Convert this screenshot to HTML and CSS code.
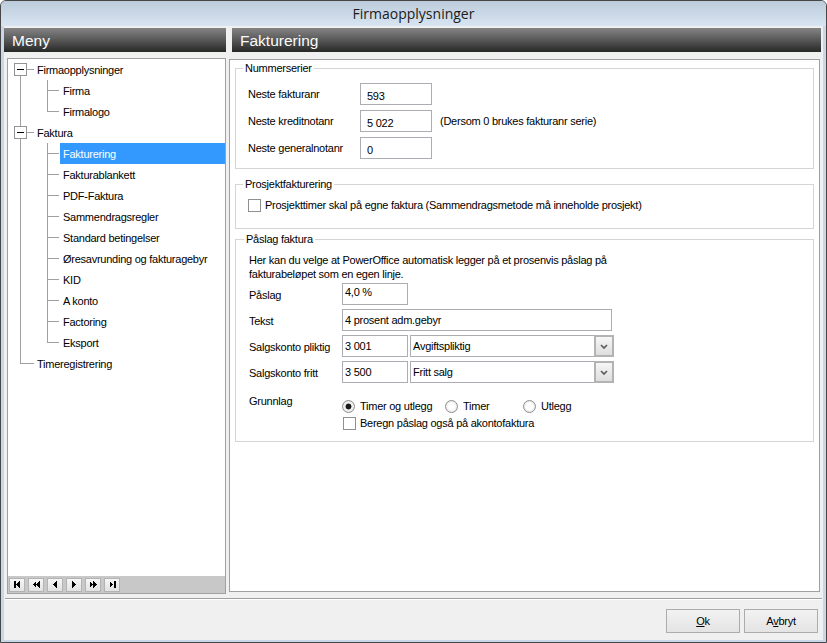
FILE: index.html
```html
<!DOCTYPE html>
<html lang="no">
<head>
<meta charset="utf-8">
<title>Firmaopplysninger</title>
<link rel="stylesheet" href="styles.css">
</head>
<body>
<div class="window">
  <div class="titlebar">Firmaopplysninger</div>
  <div class="client">
    <div class="panes">
      <div class="left">
        <div class="pane-header">Meny</div>
        <div class="tree-box">
          <div class="tree">
            <div class="row root first"><span class="exp"></span><span class="label">Firmaopplysninger</span></div>
            <div class="row child"><span class="label">Firma</span></div>
            <div class="row child last"><span class="label">Firmalogo</span></div>
            <div class="row root mid"><span class="exp"></span><span class="label">Faktura</span></div>
            <div class="row child"><span class="label selected">Fakturering</span></div>
            <div class="row child"><span class="label">Fakturablankett</span></div>
            <div class="row child"><span class="label">PDF-Faktura</span></div>
            <div class="row child"><span class="label">Sammendragsregler</span></div>
            <div class="row child"><span class="label">Standard betingelser</span></div>
            <div class="row child"><span class="label">Øresavrunding og fakturagebyr</span></div>
            <div class="row child"><span class="label">KID</span></div>
            <div class="row child"><span class="label">A konto</span></div>
            <div class="row child"><span class="label">Factoring</span></div>
            <div class="row child last"><span class="label">Eksport</span></div>
            <div class="row root lastroot"><span class="label">Timeregistrering</span></div>
          </div>
          <div class="navbar">
            <span class="nav-btn"><svg viewBox="0 0 14 12" width="14" height="12"><rect x="3.5" y="2" width="2" height="7"/><polygon points="9.5,2 9.5,9 6,5.5"/></svg></span>
            <span class="nav-btn"><svg viewBox="0 0 14 12" width="14" height="12"><polygon points="7,2 7,9 3.5,5.5"/><polygon points="10.5,2 10.5,9 7,5.5"/></svg></span>
            <span class="nav-btn"><svg viewBox="0 0 14 12" width="14" height="12"><polygon points="8.75,2 8.75,9 5.25,5.5"/></svg></span>
            <span class="nav-btn"><svg viewBox="0 0 14 12" width="14" height="12"><polygon points="5.25,2 5.25,9 8.75,5.5"/></svg></span>
            <span class="nav-btn"><svg viewBox="0 0 14 12" width="14" height="12"><polygon points="3.5,2 3.5,9 7,5.5"/><polygon points="7,2 7,9 10.5,5.5"/></svg></span>
            <span class="nav-btn"><svg viewBox="0 0 14 12" width="14" height="12"><polygon points="4.5,2 4.5,9 8,5.5"/><rect x="8.5" y="2" width="2" height="7"/></svg></span>
          </div>
        </div>
      </div>
      <div class="right">
        <div class="pane-header">Fakturering</div>
        <div class="content-box">
          <fieldset class="group g1">
            <legend>Nummerserier</legend>
            <div class="frow"><span class="lbl">Neste fakturanr</span><span class="input num">593</span></div>
            <div class="frow"><span class="lbl">Neste kreditnotanr</span><span class="input num">5 022</span><span class="note">(Dersom 0 brukes fakturanr serie)</span></div>
            <div class="frow"><span class="lbl">Neste generalnotanr</span><span class="input num">0</span></div>
          </fieldset>
          <fieldset class="group g2">
            <legend>Prosjektfakturering</legend>
            <div class="check-item"><span class="checkbox"></span>Prosjekttimer skal på egne faktura (Sammendragsmetode må inneholde prosjekt)</div>
          </fieldset>
          <fieldset class="group g3">
            <legend>Påslag faktura</legend>
            <p class="desc">Her kan du velge at PowerOffice automatisk legger på et prosenvis påslag på<br>fakturabeløpet som en egen linje.</p>
            <div class="frow"><span class="lbl">Påslag</span><span class="input short high">4,0 %</span></div>
            <div class="frow"><span class="lbl">Tekst</span><span class="input wide">4 prosent adm.gebyr</span></div>
            <div class="frow"><span class="lbl">Salgskonto pliktig</span><span class="input short">3 001</span><span class="combo"><span class="combo-text">Avgiftspliktig</span><span class="combo-btn"><svg viewBox="0 0 8 5" width="8" height="5"><polyline points="1,1 4,4 7,1"/></svg></span></span></div>
            <div class="frow"><span class="lbl">Salgskonto fritt</span><span class="input short">3 500</span><span class="combo"><span class="combo-text">Fritt salg</span><span class="combo-btn"><svg viewBox="0 0 8 5" width="8" height="5"><polyline points="1,1 4,4 7,1"/></svg></span></span></div>
            <div class="grunnlag">
              <span class="lbl">Grunnlag</span>
              <div class="options">
                <div class="radios">
                  <span class="radio-item r1"><span class="radio checked"></span>Timer og utlegg</span>
                  <span class="radio-item r2"><span class="radio"></span>Timer</span>
                  <span class="radio-item"><span class="radio"></span>Utlegg</span>
                </div>
                <div class="check-item"><span class="checkbox"></span>Beregn påslag også på akontofaktura</div>
              </div>
            </div>
          </fieldset>
        </div>
      </div>
    </div>
    <div class="separator"></div>
    <div class="footer">
      <button class="btn"><u>O</u>k</button>
      <button class="btn">A<u>v</u>bryt</button>
    </div>
  </div>
</div>
</body>
</html>
```

FILE: styles.css
```css
html, body {
  margin: 0;
  padding: 0;
}
body {
  width: 827px;
  height: 643px;
  overflow: hidden;
  background: #ffffff;
  font-family: "Liberation Sans", Arial, sans-serif;
  font-size: 11px;
  letter-spacing: -0.25px;
  color: #000;
}

.window {
  box-sizing: border-box;
  width: 827px;
  height: 643px;
  border: 1px solid #474747;
  border-radius: 6px 6px 0 0;
  background: #c9d8e9;
  display: flex;
  flex-direction: column;
}

.titlebar {
  flex: none;
  height: 25px;
  border-radius: 5px 5px 0 0;
  background: linear-gradient(#bccbdb, #d8e4f1);
  text-align: center;
  font-family: "Open Sans", "Noto Sans", sans-serif;
  font-size: 14px;
  line-height: 26px;
  letter-spacing: 0;
  color: #1b1b1b;
}

.client {
  flex: 1;
  margin: 0 3px 2px 3px;
  padding-top: 2px;
  background: #f0f0f0;
  display: flex;
  flex-direction: column;
}

.panes {
  flex: none;
  height: 566px;
  display: flex;
  gap: 3px;
}
.left {
  width: 222px;
  display: flex;
  flex-direction: column;
}
.right {
  width: 592px;
  display: flex;
  flex-direction: column;
}

.pane-header {
  flex: none;
  height: 24px;
  padding-left: 8px;
  background: linear-gradient(#848484, #5c5c5c 45%, #262826);
  color: #fbfbfb;
  font-size: 15.5px;
  line-height: 25px;
  letter-spacing: 0;
}
.right .pane-header {
  margin-left: 3px;
}

/* ---------- tree ---------- */
.tree-box {
  box-sizing: border-box;
  width: 219px;
  height: 536px;
  margin: 6px 0 0 3px;
  border: 1px solid #a0a0a0;
  background: #fff;
  display: flex;
  flex-direction: column;
}
.tree {
  flex: 1;
}
.row {
  height: 21px;
  display: flex;
  align-items: center;
  white-space: nowrap;
}
.exp {
  flex: none;
  box-sizing: border-box;
  width: 13px;
  height: 13px;
  margin-left: 6px;
  border: 1px solid #939393;
  background: linear-gradient(#000, #000) 2px 5px / 7px 1px no-repeat, #fff;
}
.label {
  box-sizing: border-box;
  height: 21px;
  padding: 2px 2px 0 2px;
  line-height: 19px;
}
.root .label {
  margin-left: 8px;
}
.root.lastroot .label {
  margin-left: 27px;
}
.root.first {
  background:
    linear-gradient(#a0a0a0, #a0a0a0) 19px 10px / 7px 1px no-repeat,
    linear-gradient(#a0a0a0, #a0a0a0) 12px 17px / 1px 4px no-repeat;
}
.root.mid {
  background:
    linear-gradient(#a0a0a0, #a0a0a0) 19px 10px / 7px 1px no-repeat,
    linear-gradient(#a0a0a0, #a0a0a0) 12px 0 / 1px 4px no-repeat,
    linear-gradient(#a0a0a0, #a0a0a0) 12px 17px / 1px 4px no-repeat;
}
.root.lastroot {
  background:
    linear-gradient(#a0a0a0, #a0a0a0) 12px 0 / 1px 11px no-repeat,
    linear-gradient(#a0a0a0, #a0a0a0) 12px 10px / 14px 1px no-repeat;
}
.child {
  background:
    linear-gradient(#a0a0a0, #a0a0a0) 12px 0 / 1px 21px no-repeat,
    linear-gradient(#a0a0a0, #a0a0a0) 39px 0 / 1px 21px no-repeat,
    linear-gradient(#a0a0a0, #a0a0a0) 40px 10px / 11px 1px no-repeat;
}
.child.last {
  background:
    linear-gradient(#a0a0a0, #a0a0a0) 12px 0 / 1px 21px no-repeat,
    linear-gradient(#a0a0a0, #a0a0a0) 39px 0 / 1px 11px no-repeat,
    linear-gradient(#a0a0a0, #a0a0a0) 40px 10px / 11px 1px no-repeat;
}
.child .label {
  margin-left: 52px;
  padding-left: 3px;
  flex: 1;
}
.label.selected {
  background: #3399ff;
  color: #fff;
}

.navbar {
  flex: none;
  height: 17px;
  padding-left: 1px;
  background: #c8c8c8;
  display: flex;
  gap: 3px;
}
.nav-btn {
  box-sizing: border-box;
  width: 16px;
  height: 14px;
  margin-top: 2px;
  border: 1px solid #b3b3b3;
  background: linear-gradient(#f6f6f6, #e2e2e2);
  display: flex;
}
.nav-btn svg {
  fill: #000;
  shape-rendering: crispEdges;
}

/* ---------- right content ---------- */
.content-box {
  box-sizing: border-box;
  width: 591px;
  height: 533px;
  margin-top: 7px;
  padding: 2px 5px 0 5px;
  border: 1px solid #a0a0a0;
  background: #fff;
}

.group {
  margin: 0;
  min-width: 0;
  border: 1px solid #d5d5d5;
  padding: 8px 8px 9px 12px;
}
.group legend {
  padding: 0 2px;
  margin-left: -5px;
  line-height: 13px;
}
.g2 {
  margin-top: 9px;
  padding-bottom: 16px;
}
.g3 {
  margin-top: 4px;
  padding: 7px 8px 11px 13px;
}

.frow {
  height: 22px;
  display: flex;
  align-items: center;
  margin-bottom: 4px;
}
.g1 .frow {
  margin-bottom: 5px;
}
.g1 .frow:last-child {
  margin-bottom: 0;
}
.lbl {
  flex: none;
  width: 93px;
  padding-top: 2px;
  line-height: 13px;
}
.g1 .lbl {
  width: 112px;
  padding-top: 0;
}

.input {
  flex: none;
  box-sizing: border-box;
  height: 22px;
  border: 1px solid #abadb3;
  background: #fff;
  padding: 4px 0 0 2px;
  line-height: 13px;
  white-space: nowrap;
}
.input.num {
  width: 72px;
  padding: 6px 0 0 6px;
}
.input.short {
  width: 66px;
}
.input.high {
  padding-top: 2px;
}
.input.wide {
  width: 270px;
}
.note {
  margin-left: 8px;
}

.combo {
  flex: none;
  width: 204px;
  height: 22px;
  margin-left: 2px;
  display: flex;
}
.combo-text {
  flex: 1;
  box-sizing: border-box;
  height: 22px;
  border: 1px solid #abadb3;
  border-right: none;
  padding: 4px 0 0 2px;
  line-height: 13px;
}
.combo-btn {
  flex: none;
  box-sizing: border-box;
  width: 20px;
  height: 22px;
  border: 2px solid #b3b3b3;
  background: linear-gradient(#f6f6f6, #dedede);
  display: flex;
  align-items: center;
  justify-content: center;
}
.combo-btn svg {
  fill: none;
  stroke: #5c5c5c;
  stroke-width: 1.7;
}

.desc {
  margin: 0 0 2px 0;
  line-height: 14px;
}

.check-item {
  display: flex;
  align-items: center;
  height: 13px;
  line-height: 13px;
  white-space: nowrap;
}
.checkbox {
  flex: none;
  box-sizing: border-box;
  width: 13px;
  height: 13px;
  margin-right: 4px;
  border: 1px solid #8e8f8f;
  background: #fff;
}

.grunnlag {
  display: flex;
  margin-top: 10px;
}
.options {
  padding-top: 7px;
  display: flex;
  flex-direction: column;
  gap: 4px;
}
.options .check-item {
  padding-left: 1px;
}
.radios {
  display: flex;
  height: 13px;
}
.radio-item {
  display: flex;
  align-items: center;
  line-height: 13px;
  white-space: nowrap;
}
.radio-item.r1 {
  width: 103px;
}
.radio-item.r2 {
  width: 78px;
}
.radio {
  flex: none;
  box-sizing: border-box;
  width: 13px;
  height: 13px;
  margin-right: 5px;
  border: 1px solid #8e8f8f;
  border-radius: 50%;
  background: radial-gradient(circle, #fff 0, #fff 3px, #e4e4e4 6px);
}
.radio.checked {
  background: radial-gradient(circle, #1a1a1a 0, #1a1a1a 2.6px, #f4f4f4 3.3px, #e4e4e4 6px);
}

/* ---------- footer ---------- */
.separator {
  flex: none;
  margin: 4px 1px 0 1px;
  border-top: 1px solid #a0a0a0;
  border-bottom: 1px solid #ffffff;
}
.footer {
  display: flex;
  justify-content: flex-end;
  gap: 4px;
  padding: 9px 5px 0 0;
}
.btn {
  box-sizing: border-box;
  width: 74px;
  height: 24px;
  padding: 0;
  border: 1px solid #acacac;
  border-radius: 0;
  background: linear-gradient(#f2f2f2, #e4e4e4);
  font-family: "Liberation Sans", Arial, sans-serif;
  font-size: 11px;
  letter-spacing: -0.25px;
  color: #000;
}
```
